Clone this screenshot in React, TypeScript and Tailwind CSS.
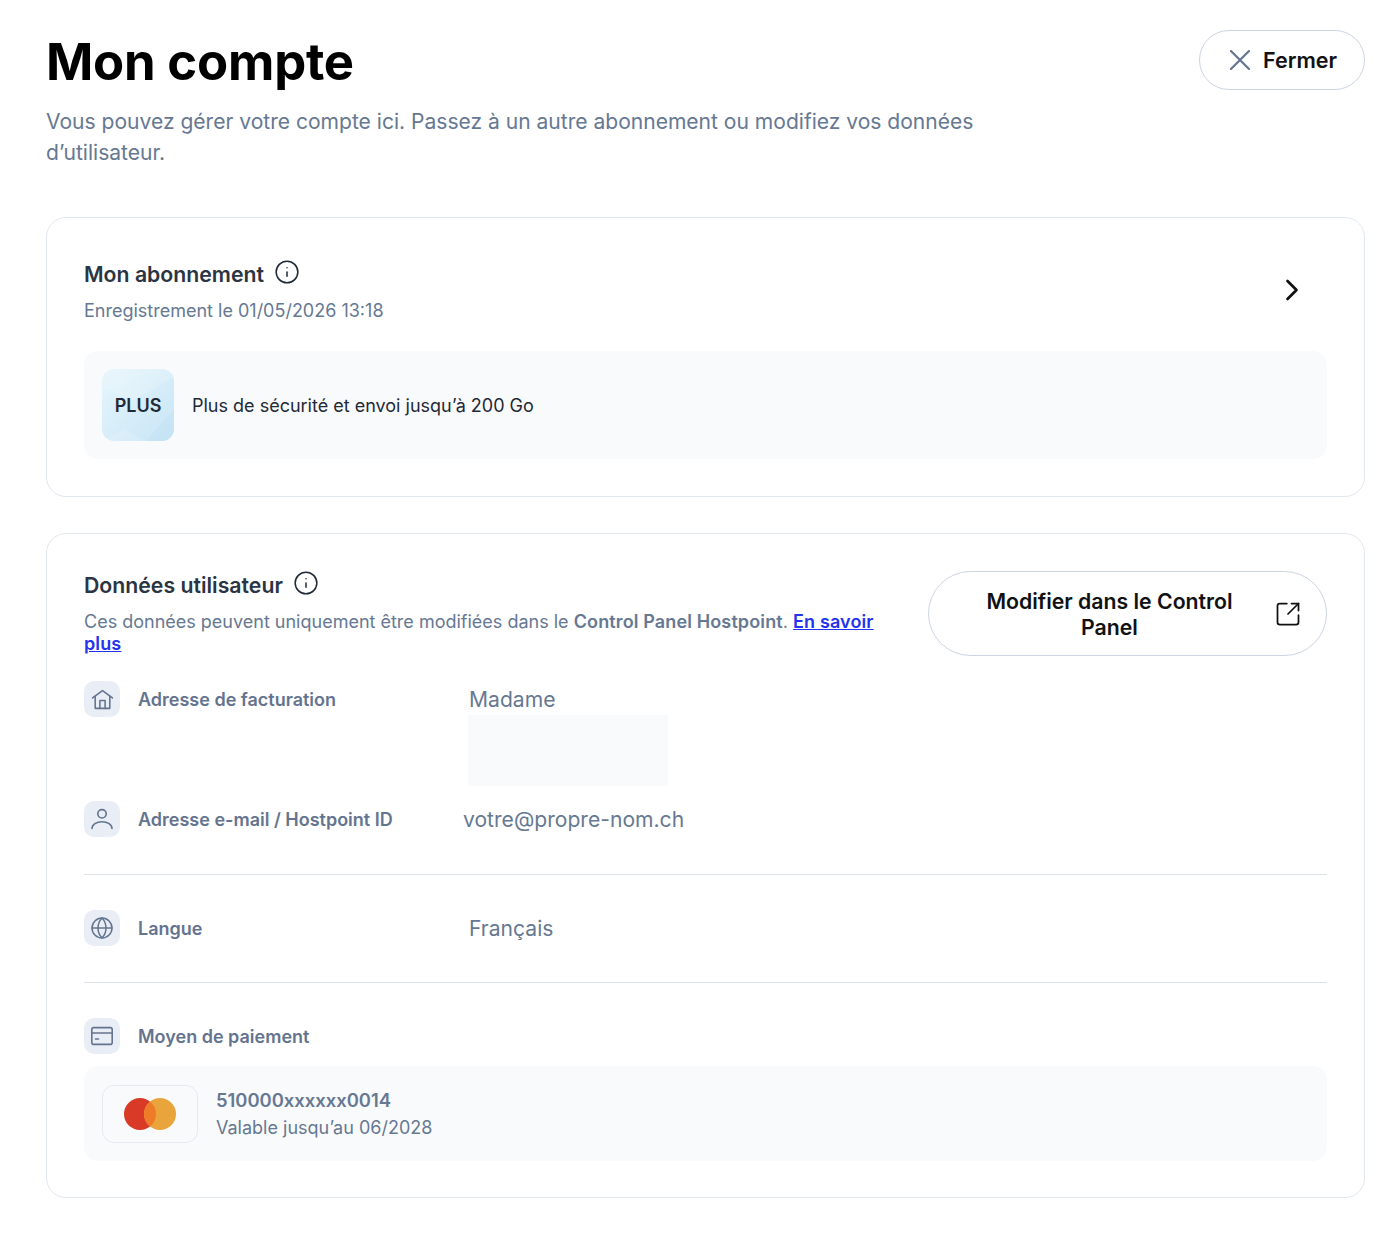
import { ChevronRight, Globe, Info, SquareArrowOutUpRight } from "lucide-react";
import type { ReactNode } from "react";

function HomeIcon() {
  return (
    <svg viewBox="0 0 24 24" className="h-[25px] w-[25px]" fill="none" stroke="currentColor" strokeWidth="1.5" strokeLinecap="round" strokeLinejoin="round">
      <path d="M2.5 10.5 12 3.5l9.5 7" />
      <path d="M5 9v11.5h14V9" />
      <path d="M9.5 20.5V13h5v7.5" />
    </svg>
  );
}

function UserIcon() {
  return (
    <svg viewBox="0 0 24 24" className="h-[24px] w-[24px]" fill="none" stroke="currentColor" strokeWidth="1.6" strokeLinecap="round">
      <circle cx="12" cy="6.8" r="4.2" />
      <path d="M2 21.5c0-4 4.4-6.8 10-6.8s10 2.8 10 6.8" />
    </svg>
  );
}

function CardIcon() {
  return (
    <svg viewBox="0 0 24 24" className="h-[24px] w-[24px]" fill="none" stroke="currentColor" strokeWidth="1.6" strokeLinecap="round">
      <rect x="1.8" y="3.6" width="20.4" height="16.8" rx="2" />
      <path d="M2 9h20" />
      <path d="M5.5 15h3" />
    </svg>
  );
}

function IconTile({ children }: { children: ReactNode }) {
  return (
    <div className="flex h-9 w-9 shrink-0 items-center justify-center rounded-[10px] bg-[#e9edf5] text-[#64748f]">
      {children}
    </div>
  );
}

function Row({ icon, label, children }: { icon: ReactNode; label: string; children?: ReactNode }) {
  return (
    <div className="flex items-start">
      <IconTile>{icon}</IconTile>
      <div className="ml-[18px] flex h-9 w-[325px] shrink-0 items-center text-[18px] font-semibold text-[#64748f]">{label}</div>
      {children}
    </div>
  );
}

export default function App() {
  return (
    <div className="min-h-[1245px] bg-white pl-[46px] pr-[35px] font-['Inter',sans-serif]">
      <header className="flex items-start justify-between pt-[30px]">
        <div className="w-[960px]">
          <h1 className="pt-[1px] text-[50.8px] leading-[62px] font-bold tracking-[-0.2px] text-black">Mon compte</h1>
          <p className="mt-[13px] text-[21.05px] leading-[31px] text-[#667892]">
            Vous pouvez gérer votre compte ici. Passez à un autre abonnement ou modifiez vos données d’utilisateur.
          </p>
        </div>
        <button type="button" className="flex h-[60px] w-[166px] items-center justify-center gap-[13px] rounded-full border border-[#ccd5e3] bg-white pl-[3px]">
          <svg viewBox="0 0 20 20" className="h-[20px] w-[20px] text-[#64748f]" fill="none" stroke="currentColor" strokeWidth="2.2" strokeLinecap="round">
            <path d="M1 1l18 18M19 1 1 19" />
          </svg>
          <span className="text-[21.5px] font-semibold text-[#111111]">Fermer</span>
        </button>
      </header>

      <section className="mt-[49px] rounded-[20px] border border-[#e2e8f0] px-[37px] pt-[42px] pb-[37px]">
        <div className="flex items-center justify-between">
          <div>
            <div className="flex items-center gap-[10px]">
              <h2 className="text-[21.25px] leading-[28px] font-semibold text-[#2a3442]">Mon abonnement</h2>
              <Info className="-mt-[4px] h-[26px] w-[26px] text-[#1f2937]" strokeWidth={1.4} />
            </div>
            <p className="mt-[12px] text-[18px] leading-[22px] text-[#667892]">Enregistrement le 01/05/2026 13:18</p>
          </div>
          <ChevronRight className="mr-[17px] mb-[2px] h-[36px] w-[36px] text-[#111111]" strokeWidth={1.8} />
        </div>
        <div className="mt-[29px] flex items-center gap-[18px] rounded-[14px] bg-[#f9fafc] p-[18px]">
          <div className="relative flex h-[72px] w-[72px] items-center justify-center overflow-hidden rounded-[12px] bg-gradient-to-br from-[#e6f6fc] to-[#c8e5f6]">
            <svg viewBox="0 0 72 72" className="absolute inset-0 h-full w-full">
              <polygon points="0,18 30,32 72,8 72,0 0,0" fill="#ffffff" opacity="0.16" />
              <polygon points="0,72 22,60 44,72" fill="#ffffff" opacity="0.14" />
              <polygon points="44,72 72,40 72,72" fill="#8fcbee" opacity="0.08" />
            </svg>
            <span className="relative text-[18px] font-semibold text-[#1f2937]">PLUS</span>
          </div>
          <p className="text-[18px] text-[#1f2937]">Plus de sécurité et envoi jusqu’à 200 Go</p>
        </div>
      </section>

      <section className="mt-[36px] rounded-[20px] border border-[#e2e8f0] px-[37px] pt-[37px] pb-[36px]">
        <div className="flex items-start justify-between">
          <div className="w-[812px]">
            <div className="flex items-center gap-[10px]">
              <h2 className="text-[21.25px] leading-[28px] font-semibold text-[#2a3442]">Données utilisateur</h2>
              <Info className="-mt-[4px] h-[26px] w-[26px] text-[#1f2937]" strokeWidth={1.4} />
            </div>
            <p className="mt-[12px] text-[18px] leading-[22px] text-[#667892]">
              Ces données peuvent uniquement être modifiées dans le <strong className="font-semibold tracking-[0.13px]">Control Panel Hostpoint</strong>.{" "}
              <a href="#" className="font-semibold tracking-[0.13px] text-[#2433f0] underline">En savoir</a>{" "}
              <a href="#" className="font-semibold tracking-[0.13px] text-[#2433f0] underline">plus</a>
            </p>
          </div>
          <button type="button" className="flex h-[85px] w-[399px] items-center rounded-full border border-[#ccd5e3] bg-white pr-[24px] pl-[50px]">
            <span className="flex-1 text-center text-[21.25px] leading-[26px] font-semibold text-[#111111]">Modifier dans le Control Panel</span>
            <SquareArrowOutUpRight className="ml-[34px] h-[28px] w-[28px] shrink-0 text-[#111111]" strokeWidth={1.5} />
          </button>
        </div>

        <div className="mt-[25px]">
          <Row icon={<HomeIcon />} label="Adresse de facturation">
            <div>
              <p className="ml-[6px] pt-[3px] text-[21.1px] leading-[31px] text-[#667892]">Madame</p>
              <div className="ml-[5px] h-[71px] w-[200px] bg-[#f9fafc]" />
            </div>
          </Row>
          <div className="mt-[15px] border-b border-[#dde2ea] pb-[37px]">
            <Row icon={<UserIcon />} label="Adresse e-mail / Hostpoint ID">
              <p className="pt-[3px] text-[21.1px] leading-[31px] text-[#667892]">votre@propre-nom.ch</p>
            </Row>
          </div>
          <div className="mt-[35px] border-b border-[#dde2ea] pb-[36px]">
            <Row icon={<Globe className="h-[24px] w-[24px]" strokeWidth={1.5} />} label="Langue">
              <p className="ml-[6px] pt-[3px] text-[21.1px] leading-[31px] text-[#667892]">Français</p>
            </Row>
          </div>
          <div className="mt-[35px]">
            <Row icon={<CardIcon />} label="Moyen de paiement" />
          </div>
          <div className="mt-[12px] flex h-[95px] items-center gap-[18px] rounded-[14px] bg-[#f9fafc] px-[18px]">
            <div className="flex h-[58px] w-[96px] items-center justify-center rounded-[12px] border border-[#e6e9f0]">
              <svg viewBox="0 0 52 32" className="h-[32px] w-[52px]">
                <circle cx="16" cy="16" r="16" fill="#d93a27" />
                <circle cx="36" cy="16" r="16" fill="#e9a53c" />
                <path d="M26 3.5a16 16 0 0 1 0 25a16 16 0 0 1 0-25z" fill="#ee7b27" />
              </svg>
            </div>
            <div>
              <p className="text-[18.4px] leading-[28px] font-semibold text-[#667892]">510000xxxxxx0014</p>
              <p className="text-[18px] leading-[28px] text-[#667892]">Valable jusqu’au 06/2028</p>
            </div>
          </div>
        </div>
      </section>
    </div>
  );
}
